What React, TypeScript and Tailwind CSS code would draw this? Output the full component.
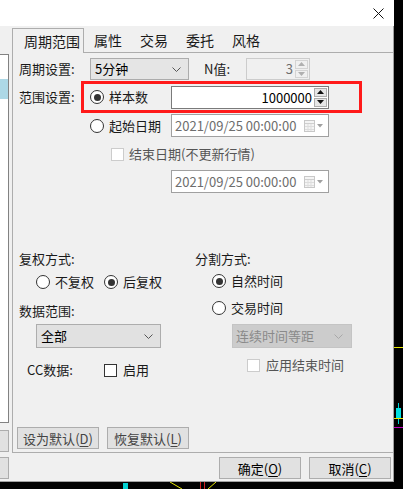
import React from "react";

const Radio = ({ checked }: { checked?: boolean }) => (
  <span className="w-[14px] h-[14px] rounded-full border border-[#333333] bg-white flex items-center justify-center shrink-0">
    {checked && <span className="w-[7px] h-[7px] rounded-full bg-[#333333]" />}
  </span>
);

const Check = ({ disabled }: { disabled?: boolean }) => (
  <span
    className={`w-[13px] h-[13px] border bg-white shrink-0 ${
      disabled ? "border-[#cccccc]" : "border-[#333333]"
    }`}
  />
);

const Chevron = ({ color = "#555555" }: { color?: string }) => (
  <svg width="9" height="5" viewBox="0 0 9 5">
    <polyline points="0.5,0.5 4.5,4.5 8.5,0.5" fill="none" stroke={color} strokeWidth="1" />
  </svg>
);

const Tri = ({ up, color }: { up?: boolean; color: string }) => (
  <svg width="7" height="4" viewBox="0 0 7 4">
    <polygon points={up ? "0,4 7,4 3.5,0" : "0,0 7,0 3.5,4"} fill={color} />
  </svg>
);

const Spinner = ({ border, arrow, bg }: { border: string; arrow: string; bg: string }) => (
  <div className="flex flex-col w-[14px] h-full gap-px py-px pr-px">
    <div className={`flex-1 flex items-center justify-center border ${border} ${bg}`}>
      <Tri up color={arrow} />
    </div>
    <div className={`flex-1 flex items-center justify-center border ${border} ${bg}`}>
      <Tri color={arrow} />
    </div>
  </div>
);

const DateBox = () => (
  <div className="w-[158px] h-[23px] border border-[#a0a0a0] bg-white flex items-center pl-[3px] pr-[4px]">
    <span className="flex-1 text-[#6d6d6d]">2021/09/25 00:00:00</span>
    <svg width="20" height="12" viewBox="0 0 20 12">
      <rect x="0.5" y="0.5" width="10" height="11" fill="#f4f4f4" stroke="#c8c8c8" />
      <line x1="1" y1="3.5" x2="10" y2="3.5" stroke="#cfcfcf" />
      <line x1="1" y1="6.5" x2="10" y2="6.5" stroke="#dddddd" />
      <line x1="1" y1="9.5" x2="10" y2="9.5" stroke="#dddddd" />
      <line x1="4" y1="4" x2="4" y2="11" stroke="#dddddd" />
      <line x1="7" y1="4" x2="7" y2="11" stroke="#dddddd" />
      <polygon points="13,4 19,4 16,7.5" fill="#a0a0a0" />
    </svg>
  </div>
);

const Btn = ({ label, k, dim }: { label: string; k: string; dim?: boolean }) => (
  <button
    className={`w-[82px] h-[22px] border border-[#adadad] bg-[#e1e1e1] flex items-center justify-center leading-none ${
      dim ? "text-[#444444]" : "text-black"
    }`}
  >
    {label}(<span className="underline underline-offset-2">{k}</span>)
  </button>
);

export default function App() {
  return (
    <div className="relative w-[403px] h-[489px] bg-black overflow-hidden font-['Microsoft_YaHei','Noto_Sans_CJK_SC',sans-serif] text-[13px] text-[#1a1a1a]">
      {/* chart behind the dialog */}
      <svg className="absolute inset-0" width="403" height="489" viewBox="0 0 403 489">
        <line x1="394" y1="347.5" x2="403" y2="347.5" stroke="#e6e600" />
        <line x1="398.5" y1="403" x2="398.5" y2="424" stroke="#00d0d0" />
        <rect x="396" y="408" width="5" height="11" fill="#00e0e0" />
        <line x1="394" y1="418.5" x2="403" y2="418.5" stroke="#e6e600" />
        <line x1="394" y1="427.5" x2="403" y2="427.5" stroke="#c000c0" />
        <rect x="123" y="483" width="5" height="6" fill="#00d0d0" />
        <line x1="170" y1="482" x2="182" y2="489" stroke="#e6e600" />
        <line x1="200.5" y1="482" x2="200.5" y2="489" stroke="#d02020" />
        <line x1="204.5" y1="482" x2="204.5" y2="489" stroke="#d02020" />
        <line x1="208" y1="489" x2="216" y2="482" stroke="#e6e600" />
      </svg>

      <div className="relative w-[394px] h-[482px] flex flex-col">
        {/* title bar */}
        <div className="h-[26px] bg-white flex items-center justify-end pr-[10px]">
          <svg width="11" height="11" viewBox="0 0 11 11">
            <path d="M0.5 0.5 L10.5 10.5 M10.5 0.5 L0.5 10.5" stroke="#111" strokeWidth="1" />
          </svg>
        </div>

        <div className="flex-1 flex bg-[#f0f0f0] border-r border-b border-[#a0a0a0]">
          {/* left list (partly hidden) */}
          <div className="w-[12px] flex flex-col pt-[28px]">
            <div className="w-[9px] h-[369px] bg-white border-t border-r border-b border-[#828282] pt-[24px]">
              <div className="h-[20px] bg-[#add8e6]" />
            </div>
            <div className="w-[9px] h-[22px] mt-[7px] bg-[#e1e1e1] border-t border-r border-b border-[#adadad]" />
            <div className="w-[9px] h-[22px] mt-[5px] bg-[#e1e1e1] border-t border-r border-b border-[#adadad]" />
          </div>

          <div className="flex-1 flex flex-col">
            {/* tabs */}
            <div className="h-[26px] flex items-end text-[14px]">
              <div className="w-[72px] h-[25px] -mb-px relative z-10 bg-[#f0f0f0] border-l border-t border-r border-[#adadad] pl-[11px] flex items-center">
                周期范围
              </div>
              {["属性", "交易", "委托", "风格"].map((t) => (
                <div key={t} className="w-[46px] h-[23px] pl-[10px] flex items-center">
                  {t}
                </div>
              ))}
            </div>

            {/* panel */}
            <div className="flex-1 flex flex-col border-l border-t border-b border-[#adadad] pl-[6px]">
              <div className="flex items-center h-[22px] mt-[5px]">
                <span className="w-[71px]">周期设置:</span>
                <div className="w-[99px] h-[22px] border border-[#acacac] bg-[#e5e5e5] flex items-center justify-between pl-[4px] pr-[7px] text-black">
                  5分钟
                  <Chevron />
                </div>
                <span className="ml-[15px] w-[42px]">N值:</span>
                <div className="w-[64px] h-[22px] border border-[#cccccc] bg-[#f0f0f0] flex">
                  <span className="flex-1 text-right pr-[2px] text-[#6d6d6d] leading-[20px]">3</span>
                  <Spinner border="border-[#d4d4d4]" arrow="#b0b0b0" bg="bg-[#f0f0f0]" />
                </div>
              </div>

              <div className="flex items-center mt-px">
                <span className="w-[62px]">范围设置:</span>
                <div className="w-[281px] h-[32px] border-[3px] border-[#ff1a1a] flex items-center pl-[6px]">
                  <Radio checked />
                  <span className="ml-[5px] w-[62px]">样本数</span>
                  <div className="w-[158px] h-[23px] border border-[#7a7a7a] bg-white flex">
                    <span className="flex-1 text-right pr-[2px] text-black leading-[21px]">1000000</span>
                    <Spinner border="border-[#adadad]" arrow="#111111" bg="bg-[#e6e6e6]" />
                  </div>
                </div>
              </div>

              <div className="flex items-center h-[23px] mt-[1px] pl-[71px]">
                <Radio />
                <span className="ml-[5px] w-[62px]">起始日期</span>
                <DateBox />
              </div>

              <div className="flex items-center h-[22px] mt-[6px] pl-[92px]">
                <Check disabled />
                <span className="ml-[5px] text-[#555555]">结束日期(不更新行情)</span>
              </div>

              <div className="flex items-center h-[23px] mt-[5px] pl-[152px]">
                <DateBox />
              </div>

              {/* lower section */}
              <div className="flex mt-[57px]">
                <div className="w-[176px] flex flex-col">
                  <div className="h-[18px] flex items-center">复权方式:</div>
                  <div className="h-[22px] mt-[3px] flex items-center pl-[17px]">
                    <Radio />
                    <span className="ml-[5px] w-[49px]">不复权</span>
                    <Radio checked />
                    <span className="ml-[5px]">后复权</span>
                  </div>
                  <div className="h-[18px] mt-[9px] flex items-center">数据范围:</div>
                  <div className="ml-[17px] mt-[4px] w-[125px] h-[24px] border border-[#adadad] bg-[#e1e1e1] flex items-center justify-between pl-[4px] pr-[7px] text-black">
                    全部
                    <Chevron />
                  </div>
                  <div className="h-[18px] mt-[13px] flex items-center pl-[8px]">
                    <span className="w-[77px]">CC数据:</span>
                    <Check />
                    <span className="ml-[6px]">启用</span>
                  </div>
                </div>

                <div className="flex flex-col">
                  <div className="h-[18px] flex items-center">分割方式:</div>
                  <div className="h-[22px] mt-[2px] flex items-center pl-[17px]">
                    <Radio checked />
                    <span className="ml-[5px]">自然时间</span>
                  </div>
                  <div className="h-[22px] mt-[5px] flex items-center pl-[17px]">
                    <Radio />
                    <span className="ml-[5px]">交易时间</span>
                  </div>
                  <div className="ml-[37px] mt-[5px] w-[120px] h-[24px] border border-[#c4c4c4] bg-[#cccccc] flex items-center justify-between pl-[3px] pr-[8px] text-[#8a8a8a]">
                    连续时间等距
                    <Chevron color="#a8a8a8" />
                  </div>
                  <div className="h-[18px] mt-[8px] flex items-center pl-[52px]">
                    <Check disabled />
                    <span className="ml-[6px] text-[#555555]">应用结束时间</span>
                  </div>
                </div>
              </div>

              <div className="mt-auto mb-[3px] -ml-[2px] flex gap-[8px]">
                <Btn label="设为默认" k="D" dim />
                <Btn label="恢复默认" k="L" dim />
              </div>
            </div>

            {/* footer */}
            <div className="h-[28px] flex justify-end gap-[8px] pt-[4px] pr-[2px]">
              <Btn label="确定" k="O" />
              <Btn label="取消" k="C" />
            </div>
          </div>
        </div>
      </div>
    </div>
  );
}
